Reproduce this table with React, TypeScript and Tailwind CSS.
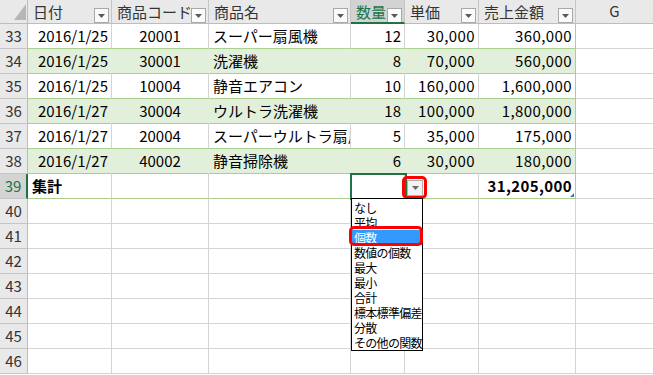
import React from "react";

type Row = {
  n: number;
  a: string;
  b: string;
  c: string;
  d: string;
  e: string;
  f: string;
  green: boolean;
};

const rows: Row[] = [
  { n: 33, a: "2016/1/25", b: "20001", c: "スーパー扇風機", d: "12", e: "30,000", f: "360,000", green: false },
  { n: 34, a: "2016/1/25", b: "30001", c: "洗濯機", d: "8", e: "70,000", f: "560,000", green: true },
  { n: 35, a: "2016/1/25", b: "10004", c: "静音エアコン", d: "10", e: "160,000", f: "1,600,000", green: false },
  { n: 36, a: "2016/1/27", b: "30004", c: "ウルトラ洗濯機", d: "18", e: "100,000", f: "1,800,000", green: true },
  { n: 37, a: "2016/1/27", b: "20004", c: "スーパーウルトラ扇風機", d: "5", e: "35,000", f: "175,000", green: false },
  { n: 38, a: "2016/1/27", b: "40002", c: "静音掃除機", d: "6", e: "30,000", f: "180,000", green: true },
];

const menuItems = ["なし", "平均", "個数", "数値の個数", "最大", "最小", "合計", "標本標準偏差", "分散", "その他の関数"];

const GRID = "grid grid-cols-[28px_84px_97px_142px_54px_74px_97px_77px]";

function FilterBtn() {
  return (
    <div className="absolute right-[2px] top-[8px] w-[15px] h-[15px] bg-[#fbfbfb] border border-[#a9a9a9] flex items-center justify-center">
      <svg width="7" height="4" viewBox="0 0 7 4">
        <path d="M0 0 L7 0 L3.5 4 Z" fill="#5a5a5a" />
      </svg>
    </div>
  );
}

function HeadCell({ label, selected }: { label: string; selected?: boolean }) {
  return (
    <div
      className={
        selected
          ? "relative h-[24px] flex items-center pl-[5px] bg-[#d3d3d3] text-[#217346] border-r border-r-[#c6c6c6] border-b-2 border-b-[#217346] whitespace-nowrap overflow-hidden"
          : "relative h-[24px] flex items-center pl-[5px] bg-[#e9e9e9] text-[#333] border-r border-r-[#c6c6c6] border-b border-b-[#bdbdbd] whitespace-nowrap overflow-hidden"
      }
    >
      <span className="leading-none">{label}</span>
      <FilterBtn />
    </div>
  );
}

function RowHead({ n, selected }: { n: number; selected?: boolean }) {
  return (
    <div
      className={
        selected
          ? "h-[25px] flex items-center justify-center bg-[#d3d3d3] text-[#217346] border-r-2 border-r-[#217346] border-b border-b-[#c6c6c6]"
          : "h-[25px] flex items-center justify-center bg-[#e9e9e9] text-[#333] border-r border-r-[#bdbdbd] border-b border-b-[#c6c6c6]"
      }
    >
      {n}
    </div>
  );
}

function DataRow({ r }: { r: Row }) {
  const cell = r.green
    ? "h-[25px] flex items-center bg-[#e2efda] border-b border-b-[#a9d08e] border-r border-r-[#e2efda] whitespace-nowrap overflow-hidden"
    : "h-[25px] flex items-center bg-white border-b border-b-[#a9d08e] border-r border-r-[#d4d4d4] whitespace-nowrap overflow-hidden";
  const last = r.green
    ? "h-[25px] flex items-center justify-end pr-[3px] bg-[#e2efda] border-b border-b-[#a9d08e] border-r border-r-[#a9d08e] whitespace-nowrap tracking-[0.4px]"
    : "h-[25px] flex items-center justify-end pr-[3px] bg-white border-b border-b-[#a9d08e] border-r border-r-[#a9d08e] whitespace-nowrap tracking-[0.4px]";
  return (
    <>
      <RowHead n={r.n} />
      <div className={cell + " justify-end pr-[3px]"}>{r.a}</div>
      <div className={cell + " justify-center"}>{r.b}</div>
      <div className={cell + " justify-start pl-[4px]"}>{r.c}</div>
      <div className={cell + " justify-end pr-[3px]"}>{r.d}</div>
      <div className={cell + " justify-end pr-[3px] tracking-[0.4px]"}>{r.e}</div>
      <div className={last}>{r.f}</div>
      <div className="h-[25px] bg-white border-b border-b-[#d4d4d4]"></div>
    </>
  );
}

function EmptyRow({ n }: { n: number }) {
  return (
    <>
      <RowHead n={n} />
      <div className="h-[25px] bg-white border-b border-r border-[#d4d4d4]"></div>
      <div className="h-[25px] bg-white border-b border-r border-[#d4d4d4]"></div>
      <div className="h-[25px] bg-white border-b border-r border-[#d4d4d4]"></div>
      <div className="h-[25px] bg-white border-b border-r border-[#d4d4d4]"></div>
      <div className="h-[25px] bg-white border-b border-r border-[#d4d4d4]"></div>
      <div className="h-[25px] bg-white border-b border-r border-[#d4d4d4]"></div>
      <div className="h-[25px] bg-white border-b border-[#d4d4d4]"></div>
    </>
  );
}

export default function App() {
  return (
    <div className="relative w-[653px] h-[375px] overflow-hidden bg-white text-black text-[15px] font-['Noto_Sans_CJK_JP','Noto_Sans',sans-serif]">
      <div className={GRID}>
        {/* header */}
        <div className="relative h-[24px] bg-[#e9e9e9] border-r border-r-[#bdbdbd] border-b border-b-[#bdbdbd]">
          <svg className="absolute left-[14px] top-[4px]" width="12" height="16" viewBox="0 0 12 16">
            <path d="M12 0 L12 16 L0 16 Z" fill="#b6b6b6" />
          </svg>
        </div>
        <HeadCell label="日付" />
        <HeadCell label="商品コード" />
        <HeadCell label="商品名" />
        <HeadCell label="数量" selected />
        <HeadCell label="単価" />
        <HeadCell label="売上金額" />
        <div className="h-[24px] flex items-center justify-center bg-[#e9e9e9] text-[#333] border-b border-b-[#bdbdbd]">G</div>

        {rows.map((r) => (
          <DataRow key={r.n} r={r} />
        ))}

        {/* total row */}
        <RowHead n={39} selected />
        <div className="h-[25px] flex items-center pl-[4px] font-bold bg-white border-b border-b-[#a9d08e] border-r border-r-[#d4d4d4]">集計</div>
        <div className="h-[25px] bg-white border-b border-b-[#a9d08e] border-r border-r-[#d4d4d4]"></div>
        <div className="h-[25px] bg-white border-b border-b-[#a9d08e] border-r border-r-[#d4d4d4]"></div>
        <div className="h-[25px] bg-white border-b border-b-[#a9d08e] border-r border-r-[#d4d4d4]"></div>
        <div className="h-[25px] bg-white border-b border-b-[#a9d08e] border-r border-r-[#d4d4d4]"></div>
        <div className="relative h-[25px] flex items-center justify-end pr-[3px] font-bold tracking-[0.4px] bg-white border-b border-b-[#a9d08e] border-r border-r-[#a9d08e]">
          31,205,000
          <div className="absolute right-[1px] bottom-[1px] w-0 h-0 border-l-[4px] border-l-transparent border-b-[4px] border-b-[#4472c4]"></div>
        </div>
        <div className="h-[25px] bg-white border-b border-b-[#d4d4d4]"></div>

        {[40, 41, 42, 43, 44, 45, 46].map((n) => (
          <EmptyRow key={n} n={n} />
        ))}
      </div>

      {/* selected cell D39 */}
      <div className="absolute left-[350px] top-[173px] w-[57px] h-[27px] border-2 border-[#217346]"></div>

      {/* dropdown button */}
      <div className="absolute left-[407px] top-[180px] w-[16px] h-[16px] bg-[#f3f3f3] border border-[#b0b0b0] flex items-center justify-center">
        <svg width="7" height="4" viewBox="0 0 7 4">
          <path d="M0 0 L7 0 L3.5 4 Z" fill="#6a6a6a" />
        </svg>
      </div>
      <div className="absolute left-[402px] top-[176px] w-[25px] h-[23px] rounded-[5px] border-[3px] border-[#ff0000]"></div>

      {/* dropdown list */}
      <div className="absolute left-[351px] top-[198px] w-[72px] h-[153px] bg-white border border-black overflow-hidden text-[12px] leading-[15px] tracking-[-0.7px] text-black">
        <div className="flex flex-col pt-[1px]">
          {menuItems.map((m, i) => (
            <div
              key={m}
              className={
                i === 2
                  ? "h-[15px] pl-[2px] whitespace-nowrap overflow-hidden bg-[#3399ff] text-white"
                  : "h-[15px] pl-[2px] whitespace-nowrap overflow-hidden"
              }
            >
              {m}
            </div>
          ))}
        </div>
      </div>
      <div className="absolute left-[349px] top-[226px] w-[74px] h-[20px] rounded-[5px] border-[3px] border-[#ff0000]"></div>
    </div>
  );
}
